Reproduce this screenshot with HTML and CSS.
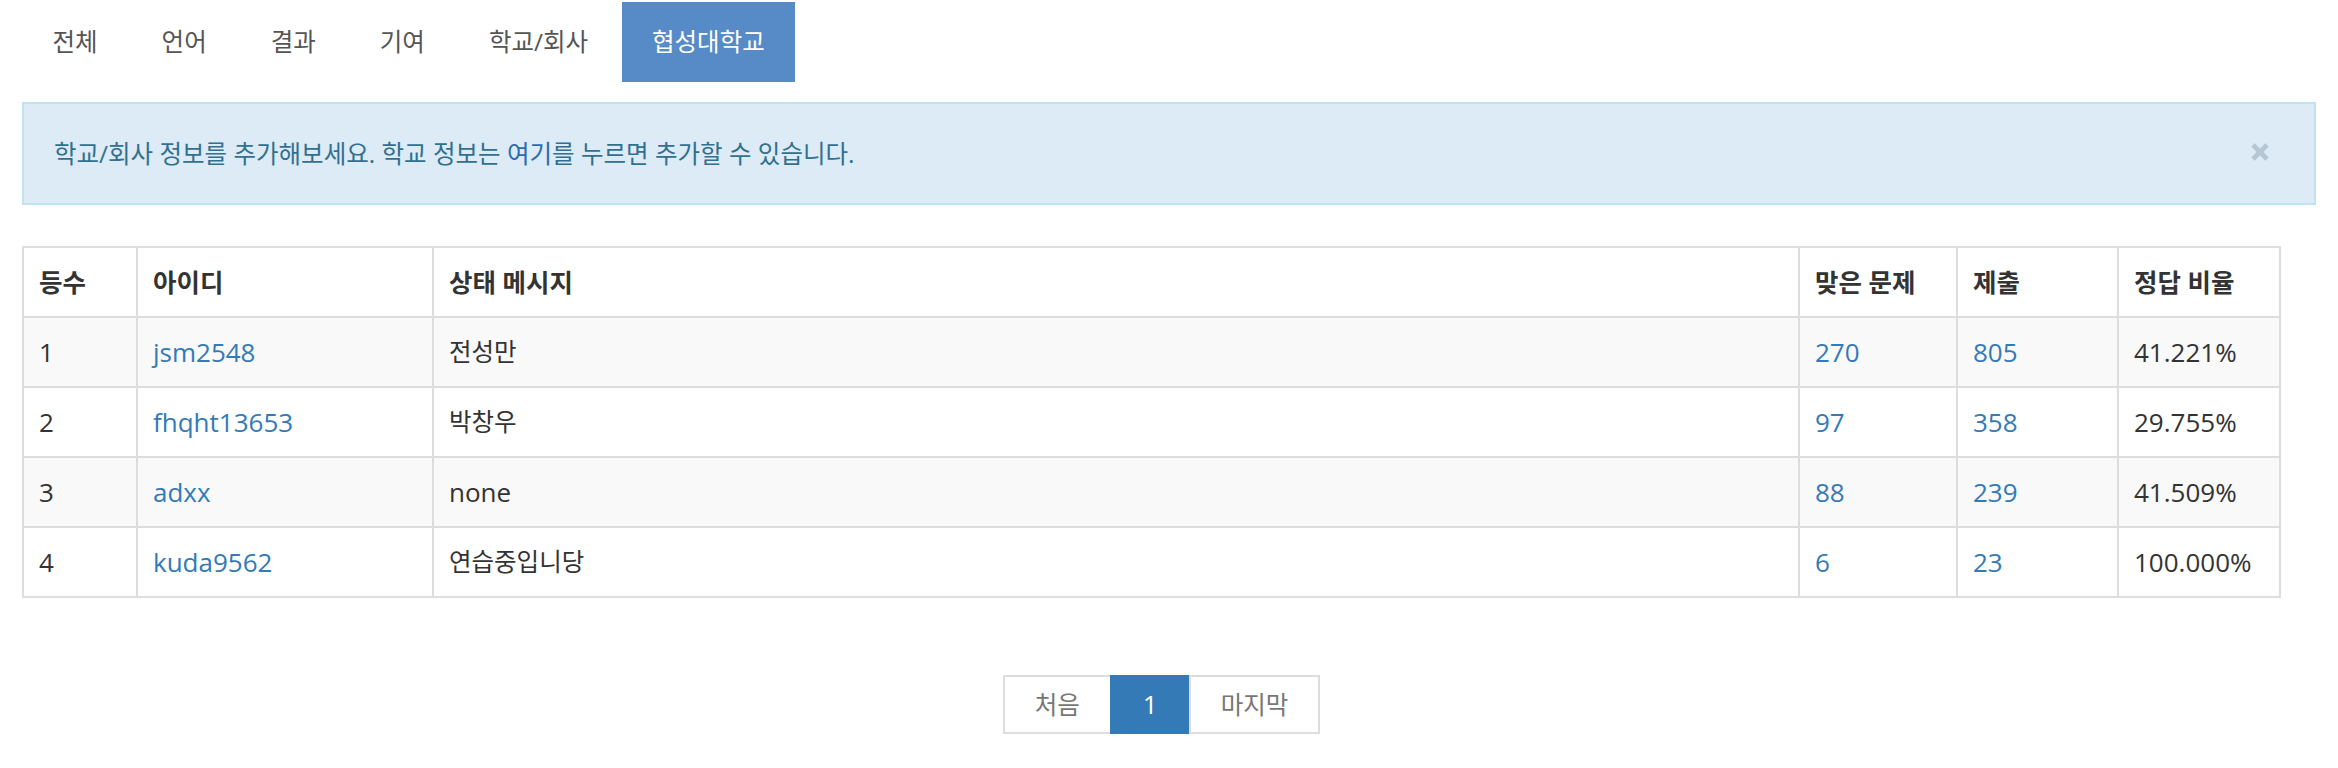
FILE: index.html
```html
<!DOCTYPE html>
<html lang="ko">
<head>
<meta charset="utf-8">
<title>협성대학교 랭킹</title>
<link rel="stylesheet" href="styles.css">
</head>
<body>
<div class="page">
  <ul class="tabs">
    <li><a class="tab" href="#">전체</a></li>
    <li><a class="tab" href="#">언어</a></li>
    <li><a class="tab" href="#">결과</a></li>
    <li><a class="tab" href="#">기여</a></li>
    <li><a class="tab" href="#">학교/회사</a></li>
    <li><a class="tab active" href="#">협성대학교</a></li>
  </ul>

  <div class="alert">
    <span class="alert-text">학교/회사 정보를 추가해보세요. 학교 정보는 <a class="alert-link" href="#">여기</a>를 누르면 추가할 수 있습니다.</span>
    <button class="close" type="button" aria-label="닫기">
      <svg width="20" height="18" viewBox="0 0 20 18"><path d="M3 2 L17 16 M17 2 L3 16" stroke="currentColor" stroke-width="4.6" stroke-linecap="butt" fill="none"/></svg>
    </button>
  </div>

  <table class="ranklist">
    <colgroup>
      <col class="c-rank"><col class="c-id"><col class="c-msg"><col class="c-ac"><col class="c-sub"><col class="c-rate">
    </colgroup>
    <thead>
      <tr>
        <th>등수</th><th>아이디</th><th>상태 메시지</th><th>맞은 문제</th><th>제출</th><th>정답 비율</th>
      </tr>
    </thead>
    <tbody>
      <tr>
        <td>1</td><td><a href="#">jsm2548</a></td><td class="ko">전성만</td><td><a href="#">270</a></td><td><a href="#">805</a></td><td>41.221%</td>
      </tr>
      <tr>
        <td>2</td><td><a href="#">fhqht13653</a></td><td class="ko">박창우</td><td><a href="#">97</a></td><td><a href="#">358</a></td><td>29.755%</td>
      </tr>
      <tr>
        <td>3</td><td><a href="#">adxx</a></td><td>none</td><td><a href="#">88</a></td><td><a href="#">239</a></td><td>41.509%</td>
      </tr>
      <tr>
        <td>4</td><td><a href="#">kuda9562</a></td><td class="ko">연습중입니당</td><td><a href="#">6</a></td><td><a href="#">23</a></td><td>100.000%</td>
      </tr>
    </tbody>
  </table>

  <ul class="pagination">
    <li><a class="page-link ko" href="#">처음</a></li>
    <li><a class="page-link current" href="#">1</a></li>
    <li><a class="page-link ko" href="#">마지막</a></li>
  </ul>
</div>
</body>
</html>
```

FILE: styles.css
```css
html, body {
  margin: 0;
  padding: 0;
  background: #fff;
}

body {
  font-family: "Open Sans", "Noto Sans CJK KR", sans-serif;
  font-size: 26px;
  color: #333;
}

a {
  text-decoration: none;
}

.page {
  padding: 2px 22px 40px 22px;
}

.ko {
  font-size: 24.5px;
}

/* Tabs */
.tabs {
  list-style: none;
  margin: 0;
  padding: 0;
  display: flex;
  gap: 3px;
}

.tab {
  display: block;
  padding: 25px 30.5px;
  line-height: 30px;
  font-size: 24.5px;
  color: #555;
}

.tab.active {
  background: #568bc7;
  color: #fff;
}

/* Alert */
.alert {
  margin-top: 20px;
  height: 103px;
  box-sizing: border-box;
  border: 2px solid #bfe4ef;
  background: #dcebf6;
  padding: 0 44px 0 30px;
  display: flex;
  align-items: center;
  justify-content: space-between;
}

.alert-text {
  font-size: 24.5px;
  line-height: 30px;
  color: #31708f;
}

.alert-link {
  color: #2b6bb3;
}

.close {
  border: 0;
  background: none;
  padding: 0;
  margin: -4px 0 0 0;
  color: #b5c7d5;
  display: flex;
  cursor: pointer;
}

/* Table */
.ranklist {
  margin-top: 41px;
  width: 2259px;
  table-layout: fixed;
  border-collapse: collapse;
  border: 2px solid #ddd;
}

.c-rank { width: 114px; }
.c-id { width: 296px; }
.c-ac { width: 158px; }
.c-sub { width: 161px; }
.c-rate { width: 162px; }

.ranklist th,
.ranklist td {
  border: 2px solid #ddd;
  padding: 19px 15px;
  line-height: 30px;
  text-align: left;
  white-space: nowrap;
}

.ranklist th {
  font-size: 25.5px;
  font-weight: 700;
  color: #333;
}

.ranklist td.ko {
  font-size: 24.5px;
}

.ranklist tbody tr:nth-child(odd) {
  background: #f9f9f9;
}

.ranklist a {
  color: #337ab7;
}

/* Pagination */
.pagination {
  list-style: none;
  margin: 77px 0 0;
  padding: 0 15px 0 0;
  display: flex;
  justify-content: center;
}

.pagination li + li {
  margin-left: -2px;
}

.page-link {
  display: block;
  height: 59px;
  box-sizing: border-box;
  padding: 0 30px;
  line-height: 55px;
  border: 2px solid #ddd;
  color: #777;
  background: #fff;
}

.page-link.current {
  background: #337ab7;
  border-color: #337ab7;
  color: #fff;
  padding: 0 31px;
}
```
